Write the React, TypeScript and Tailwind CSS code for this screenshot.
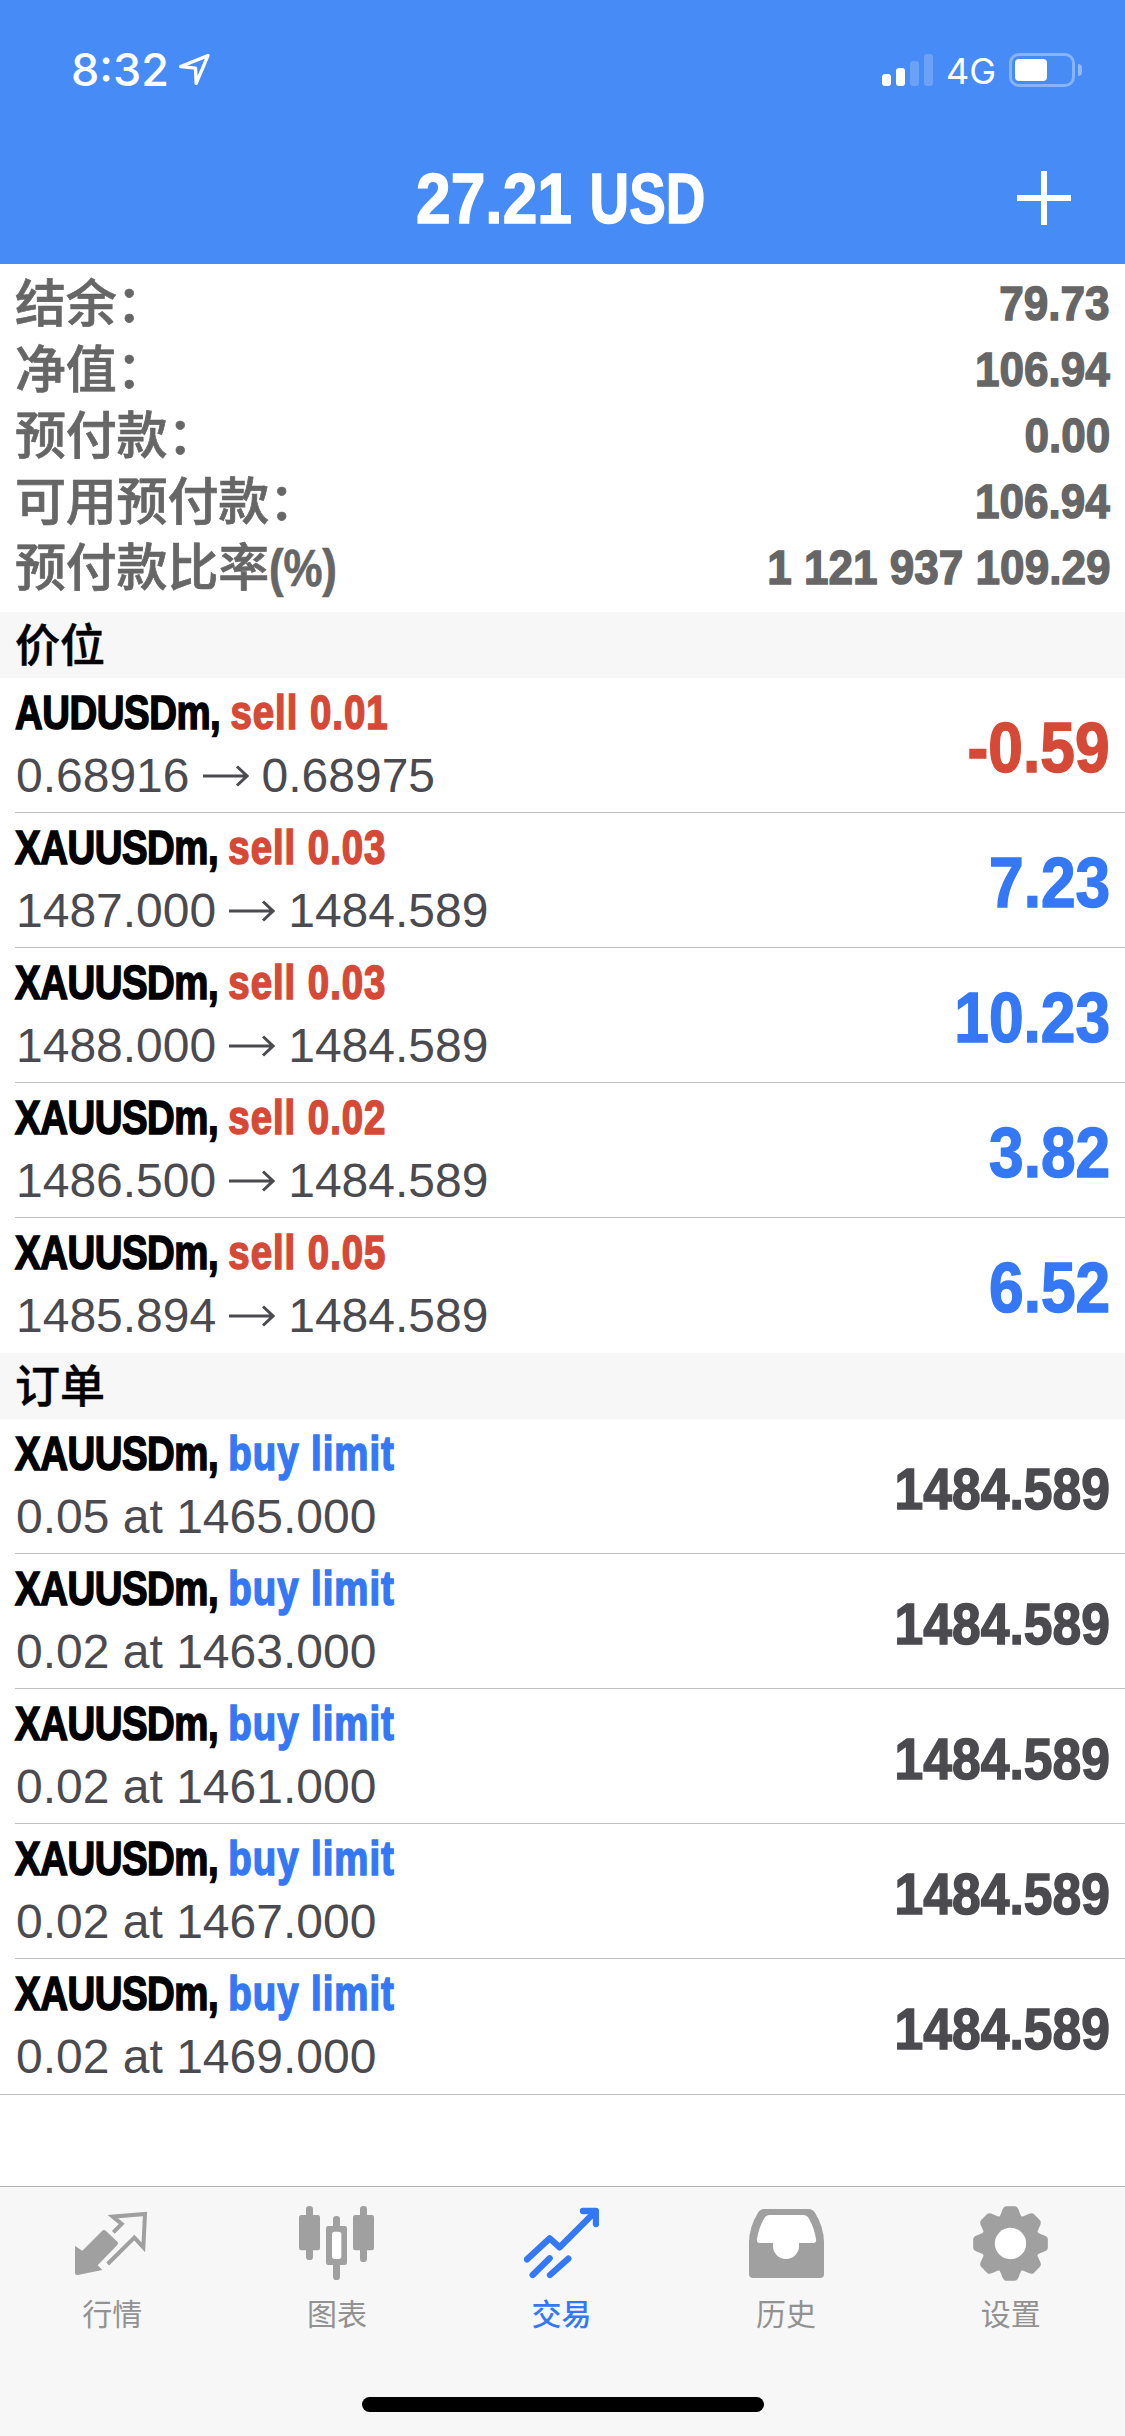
import type {ReactNode} from "react"

interface Position {
  symbol: string
  volume: string
  open: string
  current: string
  profit: string
}

interface Order {
  symbol: string
  volume: string
  price: string
  current: string
}

const summary = [
  {label: "结余：", value: "79.73"},
  {label: "净值：", value: "106.94"},
  {label: "预付款：", value: "0.00"},
  {label: "可用预付款：", value: "106.94"},
  {label: "预付款比率", unit: "(%)", value: "1 121 937 109.29"},
]

const positions: Position[] = [
  {symbol: "AUDUSDm", volume: "0.01", open: "0.68916", current: "0.68975", profit: "-0.59"},
  {symbol: "XAUUSDm", volume: "0.03", open: "1487.000", current: "1484.589", profit: "7.23"},
  {symbol: "XAUUSDm", volume: "0.03", open: "1488.000", current: "1484.589", profit: "10.23"},
  {symbol: "XAUUSDm", volume: "0.02", open: "1486.500", current: "1484.589", profit: "3.82"},
  {symbol: "XAUUSDm", volume: "0.05", open: "1485.894", current: "1484.589", profit: "6.52"},
]

const orders: Order[] = [
  {symbol: "XAUUSDm", volume: "0.05", price: "1465.000", current: "1484.589"},
  {symbol: "XAUUSDm", volume: "0.02", price: "1463.000", current: "1484.589"},
  {symbol: "XAUUSDm", volume: "0.02", price: "1461.000", current: "1484.589"},
  {symbol: "XAUUSDm", volume: "0.02", price: "1467.000", current: "1484.589"},
  {symbol: "XAUUSDm", volume: "0.02", price: "1469.000", current: "1484.589"},
]

const gearAngles = [0, 45, 90, 135, 180, 225, 270, 315]

function QuotesIcon() {
  return (
    <svg viewBox="0 0 225 225" className="size-[75px]">
      <path
        d="M0 120 22 134 81 75Q87 69 93 75L127 107Q132 112 127 117L68 178 82 192 8 207Q0 208 0 200Z"
        fill="currentColor"
      />
      <path
        d="M115 79 140 54 113 32 210 24 205 124 178 95 98 174"
        fill="none"
        stroke="currentColor"
        strokeWidth="12"
      />
    </svg>
  )
}

function ChartIcon() {
  return (
    <svg viewBox="0 0 225 225" className="size-[75px]" fill="currentColor">
      <rect x="21" y="0" width="21" height="162" rx="10" />
      <rect x="0" y="27" width="63" height="106" rx="7" />
      <rect x="102" y="30" width="21" height="192" rx="10" />
      <rect x="81" y="60" width="63" height="117" rx="7" />
      <rect x="99" y="77" width="28" height="82" rx="8" fill="#fff" />
      <rect x="183" y="0" width="21" height="168" rx="10" />
      <rect x="162" y="27" width="63" height="106" rx="7" />
    </svg>
  )
}

function TradeIcon() {
  return (
    <svg
      viewBox="0 0 225 225"
      className="size-[75px]"
      fill="none"
      stroke="currentColor"
      strokeWidth="19"
      strokeLinecap="round"
      strokeLinejoin="round"
    >
      <path d="M9 160 77 97 107 124 212 19" />
      <path d="M177 15H216V54" />
      <path d="M26 207 77 157M78 207 133 158" />
    </svg>
  )
}

function HistoryIcon() {
  return (
    <svg viewBox="0 0 225 225" className="size-[75px]">
      <path
        d="M46 9H179Q191 9 198 20Q224 62 225 108V204Q225 216 213 216H12Q0 216 0 204V108Q1 62 27 20Q34 9 46 9Z"
        fill="currentColor"
      />
      <path
        d="M62 27H163Q174 27 180 38Q196 66 201 99Q203 111 193 111H150V120A39 39 0 0 1 72 120V111H32Q22 111 24 99Q29 66 45 38Q51 27 62 27Z"
        fill="#fff"
      />
    </svg>
  )
}

function SettingsIcon() {
  return (
    <svg viewBox="-112.5 -112.5 225 225" className="size-[75px]" fill="currentColor">
      <circle r="86" />
      {gearAngles.map((angle) => (
        <path
          key={angle}
          transform={`rotate(${angle})`}
          d="M-38 -76Q-30 -82 -27 -94Q-22 -112 -13 -112H13Q22 -112 27 -94Q30 -82 38 -76Z"
        />
      ))}
      <circle r="47" fill="#fff" />
    </svg>
  )
}

const tabs = [
  {label: "行情", icon: <QuotesIcon />},
  {label: "图表", icon: <ChartIcon />},
  {label: "交易", icon: <TradeIcon />, active: true},
  {label: "历史", icon: <HistoryIcon />},
  {label: "设置", icon: <SettingsIcon />},
]

function StatusBar() {
  return (
    <div className="flex h-[132px] items-start justify-between pt-[44px] pl-[71px] pr-[43px] font-['Inter',sans-serif]">
      <div className="flex items-center">
        <span className="text-[45px] leading-[51px] font-medium">8:32</span>
        <svg viewBox="0 0 92 92" className="ml-[10px] size-[31px]">
          <path
            d="M5 37 86 5 51 87 49 42Z"
            fill="none"
            stroke="currentColor"
            strokeWidth="10"
            strokeLinejoin="round"
          />
        </svg>
      </div>
      <div className="flex items-center pt-[8px]">
        <div className="flex h-[32px] items-end gap-[5px]">
          <div className="h-[12px] w-[9px] rounded-[3px] bg-white" />
          <div className="h-[18px] w-[9px] rounded-[3px] bg-white" />
          <div className="h-[25px] w-[9px] rounded-[3px] bg-white/20" />
          <div className="h-[32px] w-[9px] rounded-[3px] bg-white/20" />
        </div>
        <span className="ml-[13px] w-[49px] pt-[2px] text-[36px] leading-[34px]">4G</span>
        <div className="ml-[14px] flex h-[34px] w-[66px] items-center rounded-[10px] border-3 border-white/35 pl-[3px]">
          <div className="h-[22px] w-[32px] rounded-[4px] bg-white" />
        </div>
        <div className="ml-[3px] h-[12px] w-[4px] rounded-r-full bg-white/40" />
      </div>
    </div>
  )
}

function SectionTitle({children}: {children: ReactNode}) {
  return (
    <h2 className="h-[66px] bg-[#f7f7f7] pl-[15px] text-[45px] leading-[70px] font-medium text-black [-webkit-text-stroke:0.5px]">
      {children}
    </h2>
  )
}

interface RowProps {
  symbol: string
  action: string
  actionColor: string
  detail: ReactNode
  value: ReactNode
  divider: boolean
}

function Row({symbol, action, actionColor, detail, value, divider}: RowProps) {
  return (
    <div className="pl-[15px]">
      <div
        className={`flex h-[135px] justify-between border-b pr-[15px] ${divider ? "border-[#bfbfc3]" : "border-transparent"}`}
      >
        <div className="pt-[5px]">
          <div className="origin-left scale-x-80 text-[48px] leading-[60px] font-bold tracking-[-0.6px] whitespace-nowrap text-black [-webkit-text-stroke:1.6px]">
            {symbol}, <span className={`tracking-[1.2px] ${actionColor}`}>{action}</span>
          </div>
          <div className="mt-[3px] ml-px flex items-center text-[48px] leading-[60px] whitespace-pre text-[#4a4a4f]">
            {detail}
          </div>
        </div>
        <div className="flex items-center pt-[6px]">{value}</div>
      </div>
    </div>
  )
}

export default function App() {
  return (
    <div className="flex h-[2436px] w-[1125px] flex-col overflow-hidden bg-white font-['Liberation_Sans','Noto_Sans_CJK_SC',sans-serif]">
      <header className="h-[264px] bg-[#478bf7] text-white">
        <StatusBar />
        <div className="grid h-[132px] grid-cols-[1fr_auto_1fr] items-center">
          <div />
          <h1 className="scale-x-89 pt-[2px] text-[70px] leading-[130px] font-bold whitespace-nowrap [-webkit-text-stroke:1.5px]">
            27.21{" "}
            <span className="inline-block w-[134px] origin-left scale-x-88">USD</span>
          </h1>
          <button className="mr-[54px] justify-self-end">
            <svg viewBox="0 0 54 54" className="size-[54px]" stroke="currentColor" strokeWidth="6">
              <path d="M27 0V54M0 27H54" />
            </svg>
          </button>
        </div>
      </header>

      <section className="h-[348px] pt-[6px] pr-[15px] pl-[15px] text-[#666]">
        {summary.map((item) => (
          <div key={item.label} className="flex h-[66px] items-center justify-between">
            <span className="pt-[3px] text-[51px] leading-[66px] font-medium tracking-[-0.2px] [-webkit-text-stroke:0.7px]">
              {item.label}
              {item.unit && (
                <span className="inline-block origin-left scale-x-86 text-[51px] font-bold">
                  {item.unit}
                </span>
              )}
            </span>
            <span className="origin-right scale-x-90 text-[49px] leading-[66px] font-bold [-webkit-text-stroke:1.4px]">
              {item.value}
            </span>
          </div>
        ))}
      </section>

      <SectionTitle>价位</SectionTitle>
      {positions.map((p, i) => (
        <Row
          key={i}
          symbol={p.symbol}
          action={`sell ${p.volume}`}
          actionColor="text-[#d64937]"
          divider={i < positions.length - 1}
          detail={
            <>
              {p.open}
              <svg
                viewBox="0 0 46 22"
                className="mx-[13px] h-[22px] w-[46px]"
                fill="none"
                stroke="currentColor"
                strokeWidth="3"
              >
                <path d="M0 11H44M34 1.5 44 11 34 20.5" />
              </svg>
              {p.current}
            </>
          }
          value={
            <span
              className={`origin-right scale-x-89 text-[70px] leading-[80px] font-bold [-webkit-text-stroke:1.5px] ${p.profit.startsWith("-") ? "text-[#d64937]" : "text-[#3478f6]"}`}
            >
              {p.profit}
            </span>
          }
        />
      ))}

      <SectionTitle>订单</SectionTitle>
      <div className="border-b border-[#bfbfc3]">
        {orders.map((o, i) => (
          <Row
            key={i}
            symbol={o.symbol}
            action="buy limit"
            actionColor="text-[#3478f6]"
            divider={i < orders.length - 1}
            detail={`${o.volume} at ${o.price}`}
            value={
              <span className="origin-right scale-x-89 text-[58px] leading-[70px] font-bold text-[#4a4a4f] [-webkit-text-stroke:1.5px]">
                {o.current}
              </span>
            }
          />
        ))}
      </div>

      <nav className="mt-auto flex h-[250px] flex-col items-center border-t border-[#b2b2b2] bg-[#f7f7f7]">
        <div className="grid w-full grid-cols-5 pt-[19px] pr-[2px]">
          {tabs.map((tab) => (
            <button
              key={tab.label}
              className={`flex flex-col items-center ${tab.active ? "text-[#3478f6]" : "text-[#a0a0a0]"}`}
            >
              {tab.icon}
              <span
                className={`mt-[14px] text-[30px] leading-[40px] ${tab.active ? "font-medium" : "text-[#929292]"}`}
              >
                {tab.label}
              </span>
            </button>
          ))}
        </div>
        <div className="mt-auto mb-[24px] h-[15px] w-[402px] rounded-full bg-black" />
      </nav>
    </div>
  )
}
